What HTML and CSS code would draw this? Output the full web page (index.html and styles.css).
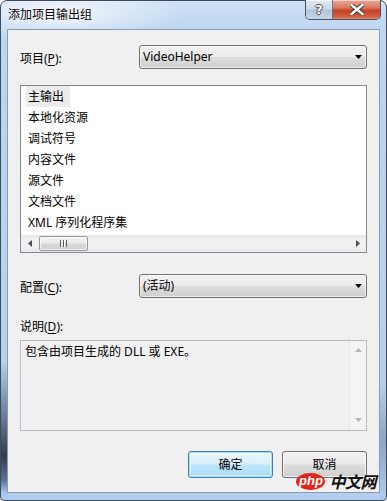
FILE: index.html
```html
<!DOCTYPE html>
<html lang="zh-CN">
<head>
<meta charset="utf-8">
<title>添加项目输出组</title>
<link rel="stylesheet" href="styles.css">
</head>
<body>
<div class="window">
  <div class="titlebar">
    <span class="title">添加项目输出组</span>
    <div class="caption-buttons">
      <div class="cbtn help"><span class="q">?</span></div>
      <div class="cbtn close">
        <svg width="14" height="11" viewBox="0 0 14 11"><path d="M1.5 1 L12.5 10 M12.5 1 L1.5 10" stroke="#3a3a3a" stroke-width="4.4" stroke-linecap="round"/><path d="M1.5 1 L12.5 10 M12.5 1 L1.5 10" stroke="#fff" stroke-width="2.4" stroke-linecap="round"/></svg>
      </div>
    </div>
  </div>
  <div class="client">
    <div class="row row-project">
      <span class="label">项目(<u>P</u>):</span>
      <div class="combo"><span class="combo-text">VideoHelper</span><svg class="arrow" width="7" height="4" viewBox="0 0 7 4"><path d="M0 0 H7 L3.5 4 Z" fill="#000"/></svg></div>
    </div>
    <div class="listbox">
      <ul class="items">
        <li><span class="sel">主输出</span></li>
        <li><span>本地化资源</span></li>
        <li><span>调试符号</span></li>
        <li><span>内容文件</span></li>
        <li><span>源文件</span></li>
        <li><span>文档文件</span></li>
        <li><span>XML 序列化程序集</span></li>
      </ul>
      <div class="hscroll">
        <div class="sb-btn"><svg width="4" height="7" viewBox="0 0 4 7"><path d="M4 0 V7 L0 3.5 Z" fill="#4d4d4d"/></svg></div>
        <div class="track">
          <div class="thumb"><span class="grip"></span></div>
        </div>
        <div class="sb-btn"><svg width="4" height="7" viewBox="0 0 4 7"><path d="M0 0 V7 L4 3.5 Z" fill="#4d4d4d"/></svg></div>
      </div>
    </div>
    <div class="row row-config">
      <span class="label">配置(<u>C</u>):</span>
      <div class="combo"><span class="combo-text">(活动)</span><svg class="arrow" width="7" height="4" viewBox="0 0 7 4"><path d="M0 0 H7 L3.5 4 Z" fill="#000"/></svg></div>
    </div>
    <div class="desc-label">说明(<u>D</u>):</div>
    <div class="textbox">
      <div class="text">包含由项目生成的 DLL 或 EXE。</div>
      <div class="vscroll">
        <svg width="7" height="4" viewBox="0 0 7 4"><path d="M0 4 H7 L3.5 0 Z" fill="#b4b4b4"/></svg>
        <svg width="7" height="4" viewBox="0 0 7 4"><path d="M0 0 H7 L3.5 4 Z" fill="#b4b4b4"/></svg>
      </div>
    </div>
    <div class="buttons">
      <div class="btn default">确定</div>
      <div class="btn">取消</div>
    </div>
  </div>
  <div class="watermark"><span class="php">php</span><span class="cn">中文网</span></div>
</div>
</body>
</html>
```
FILE: styles.css
```css
* { box-sizing: border-box; }
html, body { margin: 0; padding: 0; }
body {
  width: 387px;
  height: 501px;
  overflow: hidden;
  background: #ffffff;
  font-family: "Noto Sans", "Noto Sans CJK SC", sans-serif;
  font-size: 12px;
  color: #000;
}
.window {
  position: relative;
  width: 387px;
  height: 501px;
  border: 1px solid #3e4b5c;
  border-radius: 7px 7px 4px 4px;
  display: flex;
  flex-direction: column;
  background:
    linear-gradient(180deg, rgba(0,0,0,0) 0, rgba(0,0,0,0) 360px, #6e84a2 410px, #2f3c4f 455px, #5b7697 480px, #a9c9ee 492px) left top / 7px 100% no-repeat,
    linear-gradient(180deg, rgba(0,0,0,0) 0, rgba(0,0,0,0) 380px, #8aa6c8 440px, #a9c9ee 492px) right top / 6px 100% no-repeat,
    radial-gradient(ellipse 120px 30px at 60px 12px, rgba(255,255,255,0.75), rgba(255,255,255,0) 100%),
    linear-gradient(180deg, #cfe1f5 0, #bdd6f1 28px, #b4cfee 100%);
}
.titlebar {
  height: 28px;
  flex: none;
  display: flex;
  justify-content: space-between;
  align-items: flex-start;
  padding: 0 5px 0 7px;
}
.title {
  margin-top: 6px;
  line-height: 16px;
  font-size: 12px;
  color: #000;
  text-shadow: 0 0 6px #fff, 0 0 3px #fff;
}
.caption-buttons {
  display: flex;
  margin-top: -1px;
  height: 20px;
  border: 1px solid #4a5566;
  border-top: none;
  border-radius: 0 0 5px 5px;
  overflow: hidden;
}
.cbtn {
  height: 19px;
  display: flex;
  align-items: center;
  justify-content: center;
}
.help {
  width: 27px;
  background: linear-gradient(180deg, #dfe9f5 0, #cdd9e8 45%, #b4c4d8 55%, #c4d6ea 100%);
  border-right: 1px solid #6a7788;
  box-shadow: inset 0 1px 0 rgba(255,255,255,0.7);
}
.help .q {
  font-family: "DejaVu Sans", sans-serif;
  font-weight: bold;
  font-size: 13px;
  line-height: 13px;
  color: #fff;
  text-shadow: -1px 0 #4a4a4a, 1px 0 #4a4a4a, 0 -1px #4a4a4a, 0 1px #4a4a4a;
}
.close {
  width: 47px;
  background: linear-gradient(180deg, #e9a99b 0, #d9785f 40%, #c5432a 55%, #cf5b3c 85%, #e1856a 100%);
  box-shadow: inset 0 1px 0 rgba(255,255,255,0.5);
}
.close svg { display: block; }

.client {
  flex: none;
  height: 464px;
  margin: 0 6px;
  border: 1px solid #8b9aae;
  background: #f0f0f0;
  padding: 0 12px;
  display: flex;
  flex-direction: column;
}
.row {
  display: flex;
  align-items: center;
  height: 24px;
}
.row-project { margin-top: 15px; }
.row-config { margin-top: 21px; }
.label {
  width: 119px;
  flex: none;
  line-height: 16px;
  padding-top: 4px;
}
u { text-decoration: underline; text-underline-offset: 2px; }
.combo {
  flex: 1;
  height: 24px;
  border: 1px solid #707070;
  border-radius: 3px;
  background: linear-gradient(180deg, #f2f2f2 0, #ebebeb 48%, #dddddd 52%, #cfcfcf 100%);
  box-shadow: inset 0 0 0 1px rgba(255,255,255,0.6);
  display: flex;
  align-items: center;
  justify-content: space-between;
  padding: 0 4px 0 3px;
}
.combo-text { line-height: 16px; }
.arrow { display: block; }

.listbox {
  margin-top: 16px;
  height: 168px;
  border: 1px solid #828790;
  background: #fff;
  display: flex;
  flex-direction: column;
}
.items {
  flex: 1;
  margin: 0;
  padding: 0 0 0 5px;
  list-style: none;
}
.items li {
  height: 21px;
  line-height: 21px;
}
.items li span {
  display: inline-block;
  padding: 0 6px 0 2px;
}
.items li .sel { background: #ececec; }

.hscroll {
  height: 17px;
  flex: none;
  display: flex;
  background: linear-gradient(180deg, #e6e6e6 0, #f1f1f1 30%, #f1f1f1 70%, #e8e8e8 100%);
}
.sb-btn {
  width: 17px;
  flex: none;
  display: flex;
  align-items: center;
  justify-content: center;
}
.sb-btn svg { display: block; }
.track { flex: 1; display: flex; align-items: center; padding-left: 1px; }
.thumb {
  width: 49px;
  height: 15px;
  border: 1px solid #979797;
  border-radius: 2px;
  background: linear-gradient(180deg, #f4f4f4 0, #e8e8e8 48%, #d8d8d8 52%, #d0d0d0 100%);
  box-shadow: inset 0 0 0 1px rgba(255,255,255,0.7);
  display: flex;
  align-items: center;
  justify-content: center;
}
.grip {
  width: 7px;
  height: 7px;
  background: repeating-linear-gradient(90deg, #5c5c5c 0, #5c5c5c 1px, #f2f2f2 1px, #f2f2f2 2px, transparent 2px, transparent 3px);
}

.desc-label {
  margin-top: 21px;
  line-height: 16px;
}
.textbox {
  margin-top: 5px;
  height: 91px;
  border: 1px solid #b8bcc2;
  background: #f0f0f0;
  display: flex;
}
.textbox .text {
  flex: 1;
  padding: 3px 0 0 4px;
  line-height: 16px;
}
.vscroll {
  width: 17px;
  flex: none;
  border-left: 1px solid #e4e4e4;
  background: #f4f4f4;
  display: flex;
  flex-direction: column;
  justify-content: space-between;
  align-items: center;
  padding: 7px 0 8px;
}
.vscroll svg { display: block; }

.buttons {
  margin-top: 20px;
  display: flex;
  justify-content: flex-end;
  gap: 9px;
}
.btn {
  width: 85px;
  height: 27px;
  border: 1px solid #707070;
  border-radius: 3px;
  background: linear-gradient(180deg, #f2f2f2 0, #ebebeb 48%, #dddddd 52%, #cfcfcf 100%);
  box-shadow: inset 0 0 0 1px rgba(255,255,255,0.65);
  display: flex;
  align-items: center;
  justify-content: center;
  line-height: 16px;
}
.btn.default {
  border-color: #3c7fb1;
  background: linear-gradient(180deg, #eaf6fd 0, #d9f0fc 48%, #bee6fd 52%, #a7d9f5 100%);
  box-shadow: inset 0 0 0 1px #a9dcf5, inset 0 0 0 2px rgba(255,255,255,0.5);
}

.watermark {
  position: absolute;
  right: 10px;
  bottom: 10px;
  display: flex;
  align-items: center;
  gap: 4px;
}
.watermark .php {
  width: 29px;
  height: 17px;
  border-radius: 50%;
  background: #e3261b;
  color: #fff;
  font-family: "Liberation Sans", sans-serif;
  font-weight: bold;
  font-style: italic;
  font-size: 13px;
  line-height: 16px;
  text-align: center;
}
.watermark .cn {
  font-family: "Noto Sans CJK SC", sans-serif;
  font-weight: bold;
  font-style: italic;
  font-size: 16px;
  line-height: 17px;
  color: #111;
  letter-spacing: -0.5px;
}
```
